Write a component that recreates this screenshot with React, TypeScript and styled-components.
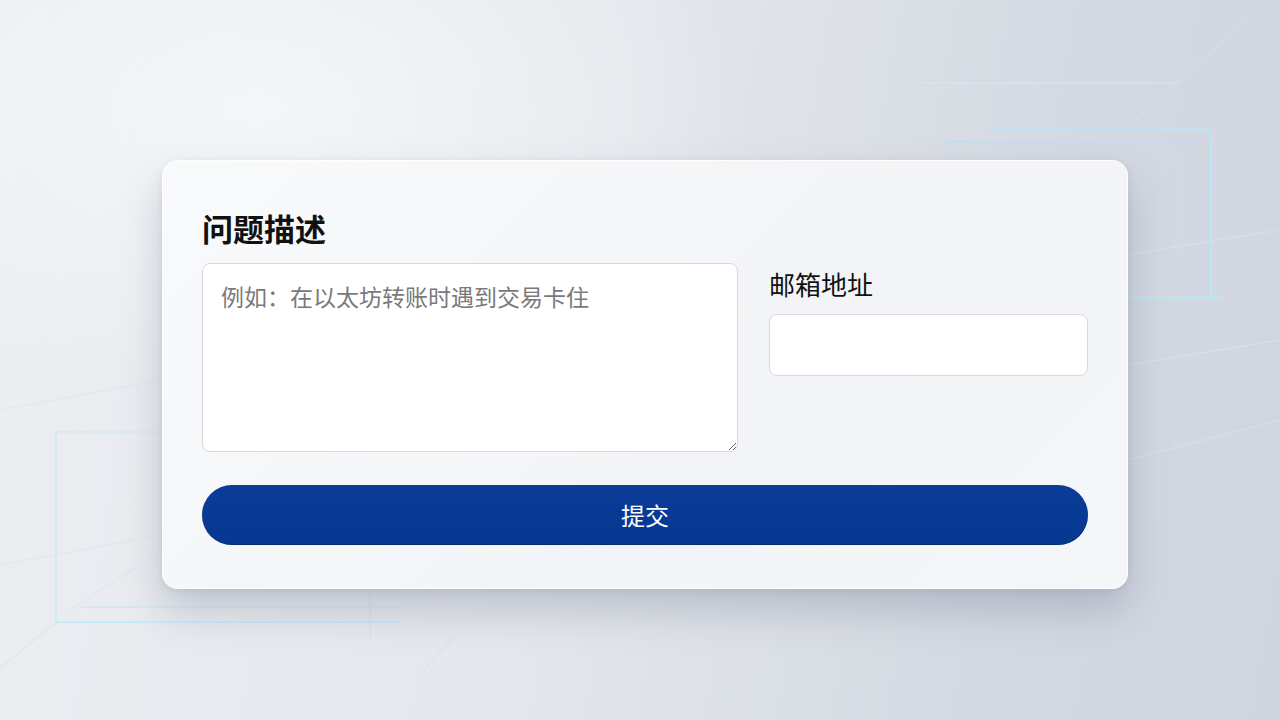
import React from "react";
import styled, { createGlobalStyle } from "styled-components";

const Global = createGlobalStyle`
  html, body { margin: 0; padding: 0; height: 100%; }
  body {
    font-family: "Noto Sans CJK SC", "Noto Sans", sans-serif;
    overflow: hidden;
  }
  #root { height: 100%; }
`;

const Page = styled.div`
  position: relative;
  width: 1280px;
  height: 720px;
  box-sizing: border-box;
  padding-top: 160px;
  padding-left: 162px;
  background:
    radial-gradient(ellipse 700px 420px at 20% 15%, rgba(246, 247, 249, 0.9), rgba(246, 247, 249, 0) 70%),
    linear-gradient(100deg, #eceef2 0%, #e4e7ec 45%, #d3d8e1 80%, #d0d5df 100%);
  overflow: hidden;
`;

const Deco = styled.svg`
  position: absolute;
  inset: 0;
  width: 1280px;
  height: 720px;
  pointer-events: none;
`;

const Card = styled.form`
  position: relative;
  width: 966px;
  height: 429px;
  box-sizing: border-box;
  padding: 46px 39px 43px;
  border-radius: 16px;
  background: linear-gradient(135deg, #f9fafb 0%, #f2f4f7 60%, #f5f6f8 100%);
  border: 1px solid rgba(255, 255, 255, 0.9);
  box-shadow: 0 22px 40px rgba(90, 100, 125, 0.28), 0 2px 6px rgba(90, 100, 125, 0.12);
  display: flex;
  flex-direction: column;
`;

const Row = styled.div`
  display: flex;
  gap: 31px;
  align-items: flex-start;
`;

const Column = styled.div<{ $width: number; $offset?: number }>`
  width: ${(p) => p.$width}px;
  flex: none;
  display: flex;
  flex-direction: column;
  margin-top: ${(p) => p.$offset ?? 0}px;
`;

const Title = styled.h2`
  margin: 0 0 14px;
  font-size: 31px;
  line-height: 42px;
  font-weight: 700;
  color: #111;
`;

const Label = styled.label`
  margin: 0 0 12px;
  font-size: 26px;
  line-height: 36px;
  font-weight: 400;
  color: #111;
`;

const TextArea = styled.textarea`
  box-sizing: border-box;
  width: 100%;
  height: 189px;
  padding: 16px 18px;
  border: 1px solid #d6d9de;
  border-radius: 8px;
  background: #fff;
  font-family: "Noto Sans CJK SC", "Noto Sans", sans-serif;
  font-size: 23px;
  line-height: 32px;
  color: #333;
  resize: vertical;
  outline: none;
  &::placeholder { color: #7a7a7a; }
`;

const Input = styled.input`
  box-sizing: border-box;
  width: 100%;
  height: 62px;
  padding: 0 16px;
  border: 1px solid #d6d9de;
  border-radius: 8px;
  background: #fff;
  font-size: 22px;
  font-family: "Noto Sans CJK SC", "Noto Sans", sans-serif;
  outline: none;
`;

const Submit = styled.button`
  margin-top: 33px;
  width: 100%;
  height: 61px;
  border: none;
  border-radius: 31px;
  background: linear-gradient(180deg, #0a3c98 0%, #063891 100%);
  box-shadow: inset 0 -1px 0 rgba(0, 20, 70, 0.35);
  color: #fff;
  font-family: "Noto Sans CJK SC", "Noto Sans", sans-serif;
  font-size: 24px;
  line-height: 1;
  cursor: pointer;
`;

export default function App() {
  return (
    <>
      <Global />
      <Page>
        <Deco viewBox="0 0 1280 720">
          <g fill="none" strokeWidth="1">
            <line x1="915" y1="83" x2="1180" y2="83" stroke="#dbe6ef" />
            <line x1="990" y1="130" x2="1211" y2="130" stroke="#b9e6f7" strokeWidth="2" />
            <line x1="1211" y1="130" x2="1211" y2="298" stroke="#b9e6f7" strokeWidth="2" />
            <line x1="943" y1="142" x2="1197" y2="142" stroke="#c2def0" strokeWidth="1.5" />
            <line x1="1197" y1="142" x2="1197" y2="400" stroke="#c9dbe8" strokeWidth="1.5" />
            <line x1="1128" y1="298" x2="1224" y2="298" stroke="#b9e6f7" strokeWidth="2" />
            <line x1="1197" y1="142" x2="1128" y2="190" stroke="#c4dff0" />
            <line x1="1270" y1="0" x2="1130" y2="125" stroke="#d6e0ea" />
            <line x1="1128" y1="365" x2="1280" y2="340" stroke="#d9e2ea" />
            <line x1="1128" y1="255" x2="1280" y2="230" stroke="#d9e2ea" />
            <line x1="1128" y1="460" x2="1280" y2="420" stroke="#d9e2ea" />
            <line x1="1160" y1="150" x2="1160" y2="580" stroke="#d3dbe5" />
            <line x1="1178" y1="150" x2="1178" y2="580" stroke="#d3dbe5" />
            <line x1="56" y1="432" x2="162" y2="432" stroke="#cfe8f4" />
            <line x1="56" y1="432" x2="56" y2="622" stroke="#c9e9f6" strokeWidth="1.5" />
            <line x1="56" y1="622" x2="400" y2="622" stroke="#c6ebf8" strokeWidth="2" />
            <line x1="80" y1="607" x2="400" y2="607" stroke="#d3e7f1" strokeWidth="1.5" />
            <line x1="56" y1="622" x2="0" y2="668" stroke="#cfe6f2" />
            <line x1="70" y1="610" x2="162" y2="550" stroke="#dbe6ee" />
            <line x1="0" y1="410" x2="162" y2="380" stroke="#e1e6ec" />
            <line x1="0" y1="565" x2="162" y2="535" stroke="#e1e6ec" />
            <line x1="370" y1="590" x2="370" y2="640" stroke="#d8e0e8" />
            <line x1="460" y1="630" x2="420" y2="675" stroke="#d8e0e8" />
          </g>
        </Deco>
        <Card onSubmit={(e) => e.preventDefault()}>
          <Row>
            <Column $width={536}>
              <Title>问题描述</Title>
              <TextArea placeholder="例如：在以太坊转账时遇到交易卡住" />
            </Column>
            <Column $width={319} $offset={59}>
              <Label htmlFor="email">邮箱地址</Label>
              <Input id="email" type="email" />
            </Column>
          </Row>
          <Submit type="submit">提交</Submit>
        </Card>
      </Page>
    </>
  );
}
